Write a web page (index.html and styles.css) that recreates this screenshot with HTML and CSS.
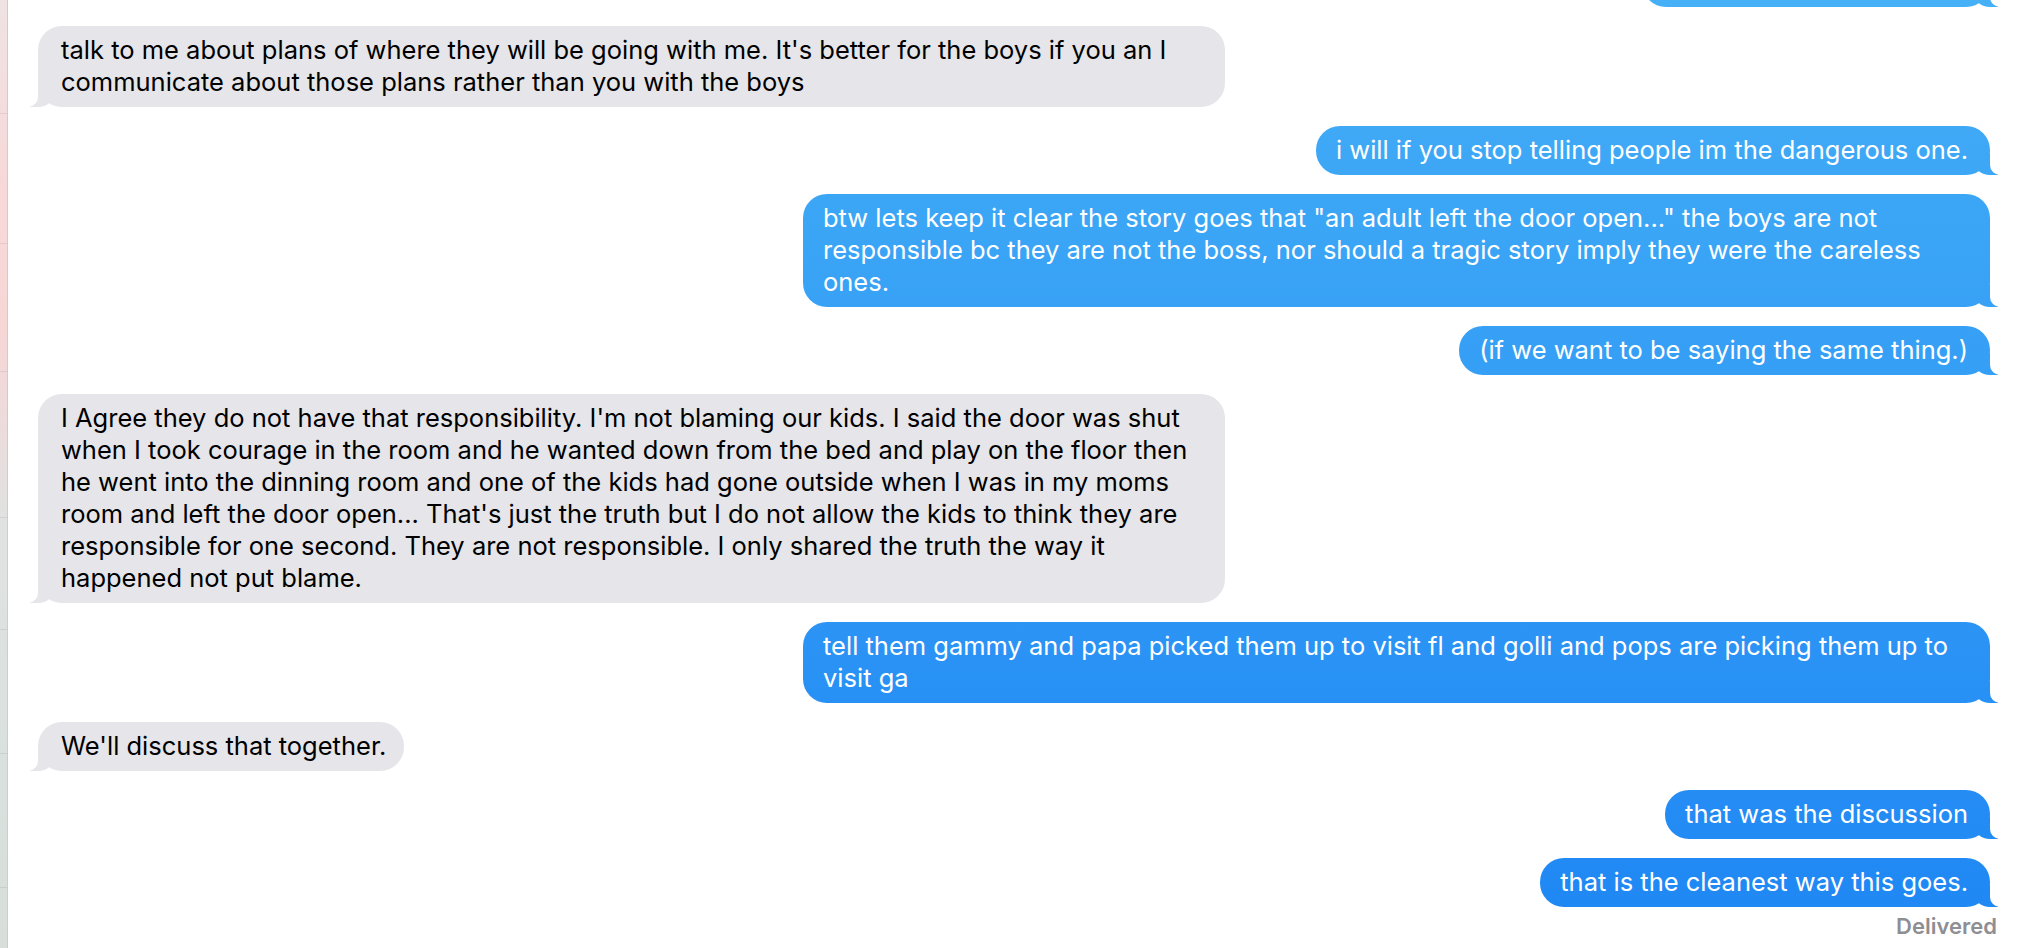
FILE: index.html
```html
<!DOCTYPE html>
<html lang="en">
<head>
<meta charset="utf-8">
<title>Messages</title>
<link rel="stylesheet" href="styles.css">
</head>
<body>
<div class="app">
  <aside class="edge">
    <div class="edge-row"></div>
    <div class="edge-row"></div>
    <div class="edge-row"></div>
    <div class="edge-row"></div>
    <div class="edge-row"></div>
    <div class="edge-row"></div>
    <div class="edge-row"></div>
  </aside>
  <main class="thread">
    <div class="msg sent partial" aria-hidden="true"></div>

    <div class="msg recv wide">talk to me about plans of where they will be going with me. It's better for the boys if you an I<br>communicate about those plans rather than you with the boys</div>

    <div class="msg sent">i will if you stop telling people im the dangerous one.</div>

    <div class="msg sent wide">btw lets keep it clear the story goes that "an adult left the door open..." the boys are not<br>responsible bc they are not the boss, nor should a tragic story imply they were the careless<br>ones.</div>

    <div class="msg sent">(if we want to be saying the same thing.)</div>

    <div class="msg recv wide">I Agree they do not have that responsibility. I'm not blaming our kids. I said the door was shut<br>when I took courage in the room and he wanted down from the bed and play on the floor then<br>he went into the dinning room and one of the kids had gone outside when I was in my moms<br>room and left the door open... That's just the truth but I do not allow the kids to think they are<br>responsible for one second. They are not responsible. I only shared the truth the way it<br>happened not put blame.</div>

    <div class="msg sent wide">tell them gammy and papa picked them up to visit fl and golli and pops are picking them up to<br>visit ga</div>

    <div class="msg recv">We'll discuss that together.</div>

    <div class="msg sent">that was the discussion</div>

    <div class="last-group">
      <div class="msg sent">that is the cleanest way this goes.</div>
      <div class="status">Delivered</div>
    </div>
  </main>
</div>
</body>
</html>
```
FILE: styles.css
```css
* {
  box-sizing: border-box;
}

html,
body {
  margin: 0;
  padding: 0;
  background: #ffffff;
}

body {
  font-family: Inter, "Helvetica Neue", "Liberation Sans", Arial, sans-serif;
  overflow: hidden;
}

.app {
  display: flex;
  height: 948px;
  overflow: hidden;
}

/* thin sliver of the conversation list on the left */
.edge {
  flex: none;
  width: 8px;
  border-right: 1px solid #cdcdcd;
  background: linear-gradient(180deg, #efe3e3 0%, #f8d8d8 20%, #f7d6d6 35%, #e0e2e1 55%, #d9e1de 80%, #d8dfda 100%);
  display: flex;
  flex-direction: column;
}

.edge-row {
  flex: none;
  border-bottom: 1px solid rgba(0, 0, 0, 0.07);
}

.edge-row:nth-child(1) { height: 114px; }
.edge-row:nth-child(2) { height: 130px; }
.edge-row:nth-child(3) { height: 128px; }
.edge-row:nth-child(4) { height: 146px; }
.edge-row:nth-child(5) { height: 112px; }
.edge-row:nth-child(6) { height: 124px; }
.edge-row:nth-child(7) { height: 134px; }

.thread {
  flex: 1;
  min-width: 0;
  display: flex;
  flex-direction: column;
  gap: 19px;
  padding: 0 34px 0 30px;
}

.msg {
  position: relative;
  max-width: 1187px;
  padding: 8px 22px 9px 20px;
  font-size: 25.5px;
  line-height: 32px;
  letter-spacing: 0;
  border-radius: 24px;
}

.recv {
  align-self: flex-start;
  background: #e5e5ea;
  color: #000000;
  padding: 8px 18px 9px 23px;
}

.sent {
  align-self: flex-end;
  color: #ffffff;
  background: linear-gradient(180deg, #46b0f7 0px, #3ea8f6 150px, #2189f4 880px, #1f86f3 948px) fixed;
}

.wide {
  width: 1187px;
}

.partial {
  width: 348px;
  height: 49px;
  margin-top: -42px;
}

/* bubble tails */
.sent::before,
.sent::after,
.recv::before,
.recv::after {
  content: "";
  position: absolute;
  bottom: 0;
  height: 22px;
}

.sent::before {
  right: -8px;
  width: 24px;
  background: inherit;
  border-bottom-left-radius: 16px 14px;
}

.sent::after {
  right: -10px;
  width: 10px;
  background: #ffffff;
  border-bottom-left-radius: 10px;
}

.recv::before {
  left: -8px;
  width: 24px;
  background: #e5e5ea;
  border-bottom-right-radius: 16px 14px;
}

.recv::after {
  left: -10px;
  width: 10px;
  background: #ffffff;
  border-bottom-right-radius: 10px;
}

.last-group {
  display: flex;
  flex-direction: column;
  align-items: flex-end;
  gap: 6px;
}

.status {
  margin-right: -7px;
  margin-top: 1px;
  font-size: 22px;
  line-height: 24px;
  font-weight: 600;
  color: #8e8e93;
}
```
